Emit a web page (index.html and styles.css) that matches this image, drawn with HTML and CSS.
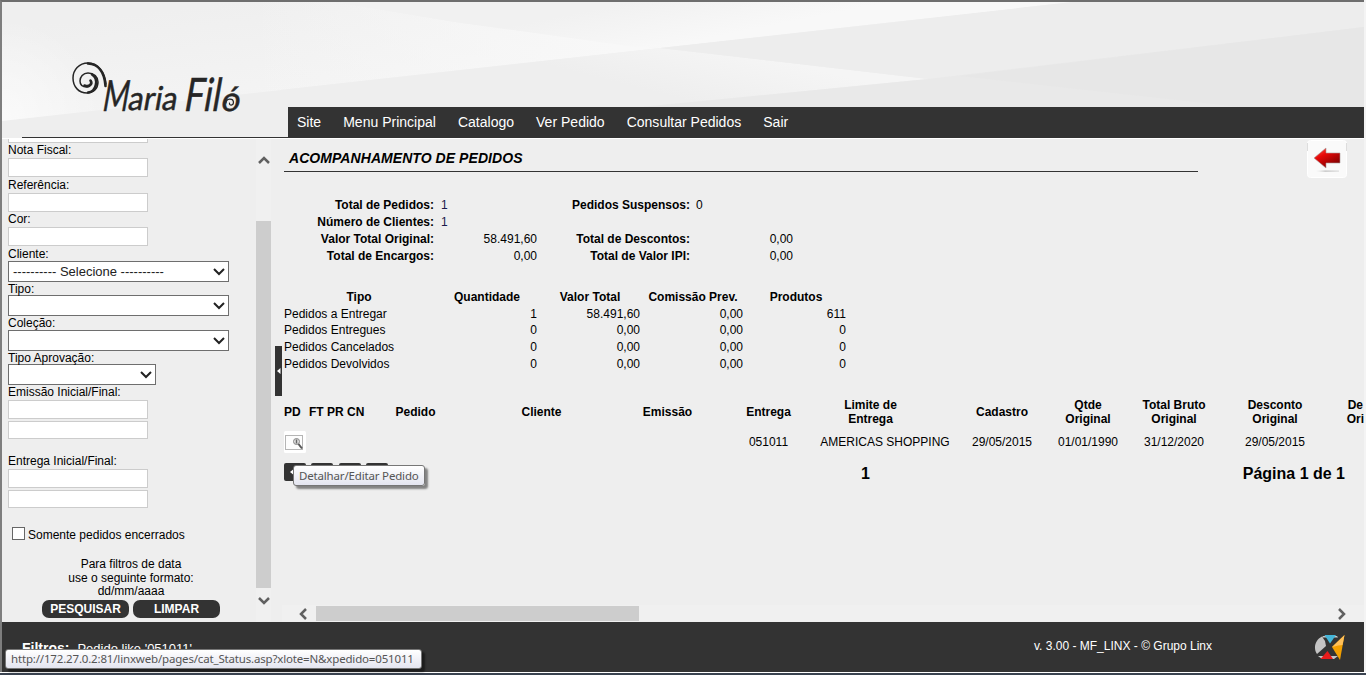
FILE: index.html
```html
<!DOCTYPE html>
<html lang="pt-BR">
<head>
<meta charset="utf-8">
<title>Acompanhamento de Pedidos</title>
<link rel="stylesheet" href="styles.css">
</head>
<body>
<div class="window">
  <header class="header">
    <svg class="header-art" width="1362" height="135" viewBox="2 2 1362 135">
      <defs>
        <linearGradient id="g1" gradientUnits="userSpaceOnUse" x1="250" y1="0" x2="262" y2="105"><stop offset="0" stop-color="#efefef"/><stop offset="1" stop-color="#f4f4f4"/></linearGradient>
        <linearGradient id="g2" gradientUnits="userSpaceOnUse" x1="250" y1="0" x2="620" y2="0"><stop offset="0" stop-color="#f8f8f8" stop-opacity="0"/><stop offset="1" stop-color="#f8f8f8"/></linearGradient>
        <linearGradient id="g3" gradientUnits="userSpaceOnUse" x1="740" y1="50" x2="725" y2="110"><stop offset="0" stop-color="#f5f5f5"/><stop offset="1" stop-color="#eeeeee"/></linearGradient>
        <linearGradient id="g4" gradientUnits="userSpaceOnUse" x1="640" y1="0" x2="650" y2="50"><stop offset="0" stop-color="#f1f1f1"/><stop offset="1" stop-color="#f8f8f8"/></linearGradient>
        <radialGradient id="g5" gradientUnits="userSpaceOnUse" cx="2" cy="118" r="100"><stop offset="0" stop-color="#fff" stop-opacity=".6"/><stop offset="1" stop-color="#fff" stop-opacity="0"/></radialGradient>
      </defs>
      <path fill="#eeeeee" d="M2 2h1362v135H2z"/>
      <path fill="url(#g1)" d="M2 2H1073L660 48 2 121z"/>
      <path fill="url(#g5)" d="M2 2H300V88L2 121z"/>
      <path fill="url(#g2)" d="M335 2 455 22 635 46 660 48 250 94V2z"/>
      <path fill="url(#g4)" d="M335 2H1073L660 48 635 47 455 22z"/>
      <path fill="url(#g3)" d="M660 48 928 79 640 107H280V90z"/>
      <path fill="#ededed" d="M660 48 1073 2H1364V27L928 79z"/>
      <path fill="#e9e9e9" d="M928 79 1364 27V107H640z"/>
      <path fill="#e7e7e7" d="M960 76 1364 27V107H1240z"/>
    </svg>
    <svg class="logo" width="178" height="64" viewBox="66 56 178 64" role="img" aria-label="Maria Filó">
      <g fill="none" stroke="#262626" stroke-linecap="round">
        <path stroke-width="1.500" d="M106 84C105 72 98 63 88 63 79 63 73 70 73 78 73 87 79 93 87 93 94 93 98 88 98 82 98 77 94 73 88 73 83 73 80 77 80 81 80 85 83 87 87 87 90 87 92 84 91 81"/>
        <path stroke-width="2.600" d="M88 63.500C98 64 104.500 72 105.500 86M88 92.500C96 92 99.500 79 92 74.500M84.500 85.500C89 87.500 93 84 90.500 80.500"/>
        <path stroke-width="1.200" d="M226 103C226 98 233 98 233.500 102 233.500 106 229 106 229.500 103"/>
      </g>
      <g class="logo-text" transform="translate(19.500 0) skewX(-10)">
        <text x="101.500" y="111.500" font-size="43" textLength="26" lengthAdjust="spacingAndGlyphs">M</text>
        <text x="127" y="110.500" font-size="33" textLength="49" lengthAdjust="spacingAndGlyphs">aria</text>
        <text x="183" y="111.500" font-size="46" textLength="36" lengthAdjust="spacingAndGlyphs">Fil</text>
        <text x="220" y="111" font-size="34" textLength="19" lengthAdjust="spacingAndGlyphs">ó</text>
      </g>
    </svg>
    <nav class="nav">
      <a>Site</a><a>Menu Principal</a><a>Catalogo</a><a>Ver Pedido</a><a>Consultar Pedidos</a><a>Sair</a>
    </nav>
  </header>

  <div class="body">
    <aside class="sidebar">
      <form class="filters">
        <div class="input cut"></div>
        <label class="l15">Nota Fiscal:</label><div class="input"></div>
        <label class="l16">Referência:</label><div class="input"></div>
        <label class="l15">Cor:</label><div class="input"></div>
        <label class="l15 low">Cliente:</label>
        <div class="select"><span>---------- Selecione ----------</span><svg width="12" height="8"><path d="M1 1 6 6 11 1"/></svg></div>
        <label class="l13">Tipo:</label>
        <div class="select"><span></span><svg width="12" height="8"><path d="M1 1 6 6 11 1"/></svg></div>
        <label class="l14">Coleção:</label>
        <div class="select"><span></span><svg width="12" height="8"><path d="M1 1 6 6 11 1"/></svg></div>
        <label class="l13">Tipo Aprovação:</label>
        <div class="select narrow"><span></span><svg width="12" height="8"><path d="M1 1 6 6 11 1"/></svg></div>
        <label class="l15">Emissão Inicial/Final:</label><div class="input"></div><div class="input second"></div>
        <label class="l15 group">Entrega Inicial/Final:</label><div class="input"></div><div class="input second"></div>
        <div class="check"><i></i><span>Somente pedidos encerrados</span></div>
        <p class="hint">Para filtros de data<br>use o seguinte formato:<br>dd/mm/aaaa</p>
        <div class="buttons"><b>PESQUISAR</b><b>LIMPAR</b></div>
      </form>
      <div class="vscroll">
        <svg width="12" height="10"><path d="M1 8 6 3 11 8"/></svg>
        <div class="vthumb"></div>
        <svg width="12" height="10"><path d="M1 2 6 7 11 2"/></svg>
      </div>
    </aside>
    <div class="splitter"><div class="handle"><svg width="5" height="6"><path fill="#fff" d="M4.500 0v6L1 3z"/></svg></div></div>

    <main class="main">
      <div class="content">
        <div class="titlebar">
          <h1>ACOMPANHAMENTO DE PEDIDOS</h1>
          <svg class="back" width="40" height="40" viewBox="0 0 40 40">
            <defs>
              <linearGradient id="red" x1="0" y1="0" x2=".7" y2="1"><stop offset="0" stop-color="#ff6a5a"/><stop offset=".4" stop-color="#e80808"/><stop offset="1" stop-color="#7a0000"/></linearGradient>
              <linearGradient id="sh" x1="0" y1="0" x2="1" y2="0"><stop offset="0" stop-color="#ddd" stop-opacity="0"/><stop offset=".4" stop-color="#bbb"/><stop offset="1" stop-color="#ddd"/></linearGradient>
            </defs>
            <rect x=".5" y="1.500" width="39" height="37" rx="3" fill="#fafafa" stroke="#fff"/>
            <path d="M.5 4V12M39.500 4V12" stroke="#ddd"/>
            <path d="M7 19 19 9V14H33V24H19V29z" fill="url(#red)" stroke="#a99" stroke-width=".6"/>
            <path d="M9 31.500H32v1.200H9z" fill="url(#sh)"/>
          </svg>
        </div>

        <div class="totals">
          <b>Total de Pedidos:</b><span class="lft">1</span><b>Pedidos Suspensos:</b><span class="lft2">0</span>
          <b>Número de Clientes:</b><span class="lft">1</span><b></b><span></span>
          <b>Valor Total Original:</b><span>58.491,60</span><b>Total de Descontos:</b><span>0,00</span>
          <b>Total de Encargos:</b><span>0,00</span><b>Total de Valor IPI:</b><span>0,00</span>
        </div>

        <div class="types">
          <b>Tipo</b><b>Quantidade</b><b>Valor Total</b><b>Comissão Prev.</b><b>Produtos</b>
          <span>Pedidos a Entregar</span><span>1</span><span>58.491,60</span><span>0,00</span><span>611</span>
          <span>Pedidos Entregues</span><span>0</span><span>0,00</span><span>0,00</span><span>0</span>
          <span>Pedidos Cancelados</span><span>0</span><span>0,00</span><span>0,00</span><span>0</span>
          <span>Pedidos Devolvidos</span><span>0</span><span>0,00</span><span>0,00</span><span>0</span>
        </div>

        <div class="orders heads">
          <b class="start">PD</b><b class="start">FT PR CN</b><b>Pedido</b><b>Cliente</b><b>Emissão</b><b>Entrega</b><b>Limite de<br>Entrega</b><b>Cadastro</b><b>Qtde<br>Original</b><b>Total Bruto<br>Original</b><b>Desconto<br>Original</b><b class="end">De<br>Ori</b>
        </div>
        <div class="orders cells">
          <svg class="start" width="22" height="22" viewBox="0 0 22 22">
            <rect width="22" height="22" rx="1.500" fill="#fff"/>
            <rect x="1.500" y="4.500" width="17" height="14" fill="#fdfdfd" stroke="#b5b5b5"/>
            <circle cx="12.500" cy="10.500" r="3" fill="#ddd" stroke="#888"/>
            <path d="M12.500 8.500v4" stroke="#666" stroke-width="1.400"/>
            <path d="M14.500 13 18 17.500" stroke="#555" stroke-width="2"/>
          </svg>
          <span></span><span></span><span></span><span></span><span>051011</span><span class="store">AMERICAS SHOPPING</span><span>29/05/2015</span><span>01/01/1990</span><span>31/12/2020</span><span>29/05/2015</span><span></span>
        </div>
        <div class="pager">
          <div class="page-buttons"><i><svg width="6" height="8"><path fill="#fff" d="M6 0v8L1 4z"/></svg></i><i></i><i></i><i></i></div>
          <b class="current">1</b><b class="pages">Página 1 de 1</b>
        </div>
      </div>
      <div class="hscroll">
        <svg width="10" height="12"><path d="M8 1 3 6 8 11"/></svg>
        <div class="hthumb"></div>
        <svg width="10" height="12"><path d="M2 1 7 6 2 11"/></svg>
      </div>
    </main>
  </div>

  <footer class="footer">
    <div class="active-filter"><b>Filtros:</b><span>Pedido like '051011'</span></div>
    <div class="version">v. 3.00 - MF_LINX - © Grupo Linx</div>
    <svg class="linx" width="32" height="28" viewBox="0 0 32 28">
      <path fill="#c4c4c4" d="M8 3.500 11 8 12 13 3 21C-1 15 1 7 8 3.500zM4 23 24 23 20 26H8z"/>
      <path fill="#c4c4c4" d="M9 3H23L24 4.500H8z"/>
      <path fill="#45b5d8" d="M10.500 2H22L16 10.500z"/>
      <path fill="#e81c1c" d="M13.500 18 19 26H6.500z"/>
      <path fill="#f3a000" d="M30.500 2 26 27 18 14z"/>
      <path fill="#ffc05a" d="M30.500 2 28.500 12Q25 12 18 14z"/>
    </svg>
  </footer>
</div>
<div class="desktop-edge"></div>
<div class="tip tip-detail">Detalhar/Editar Pedido</div>
<div class="tip tip-link">http://172.27.0.2:81/linxweb/pages/cat_Status.asp?xlote=N&amp;xpedido=051011</div>
</body>
</html>
```

FILE: styles.css
```css
* { box-sizing: border-box; }
body {
  margin: 0;
  width: 1366px;
  height: 675px;
  overflow: hidden;
  position: relative;
  background: #f4f4f4;
  color: #000;
  font: 12px/14px "Liberation Sans", Arial, sans-serif;
}
svg { display: block; flex: none; }
.window {
  width: 1364px;
  height: 672px;
  display: flex;
  flex-direction: column;
  border-top: 2px solid #6e6e6e;
  border-left: 2px solid #7e7e7e;
  background: #eee;
}
.desktop-edge { height: 3px; border-top: 1px solid #fff; background: #3a4350; }

/* header */
.header { position: relative; height: 137px; flex: none; border-bottom: 1px solid #fff; }
.header-art { position: absolute; top: 0; left: 0; }
.logo { position: absolute; left: 64px; top: 54px; }
.logo-text { font-family: Lato, "Liberation Sans", sans-serif; fill: #262626; stroke: #262626; stroke-width: .5px; }
.header::after { content: ""; position: absolute; left: 20px; bottom: 0; width: 266px; height: 1px; background: #333; }
.nav {
  position: relative;
  display: flex;
  gap: 22px;
  margin: 105px 0 0 286px;
  padding: 0 9px;
  height: 31px;
  background: #333;
  color: #fff;
  font-size: 14px;
  line-height: 31px;
  letter-spacing: .01px;
  white-space: nowrap;
}

.body { display: flex; flex: none; height: 483px; }

/* sidebar */
.sidebar { width: 269px; flex: none; display: flex; overflow: hidden; }
.filters { width: 254px; padding-left: 6px; }
.filters label { display: block; white-space: nowrap; }
.l13 { height: 13px; line-height: 14px; }
.l14 { height: 14px; line-height: 14px; }
.l15 { height: 15px; line-height: 15px; }
.l16 { height: 16px; line-height: 16px; }
.low { line-height: 17px; }
.input { width: 140px; height: 19px; background: #fff; border: 1px solid #ccc; }
.input.cut { height: 4px; border-top: 0; }
.input.second { margin-top: 2px; height: 18px; }
.filters .group { margin-top: 15px; }
.select {
  width: 221px; height: 21px; background: #fff; border: 1px solid #6e6e6e;
  display: flex; align-items: center; justify-content: space-between;
  padding: 0 3px 0 4px; font-size: 13px; color: #222;
}
.select.narrow { width: 148px; }
.select svg { fill: none; stroke: #222; stroke-width: 2; }
.check { display: flex; align-items: flex-start; gap: 3px; margin: 19px 0 0 4px; height: 14px; line-height: 16px; }
.check i { width: 13px; height: 13px; background: #fff; border: 1px solid #666; }
.hint { margin: 17px 0 0; width: 246px; text-align: center; line-height: 13.500px; }
.buttons { display: flex; gap: 4px; margin: 1px 0 0 34px; }
.buttons b { width: 87px; height: 18px; border-radius: 7px; background: #333; color: #fff; text-align: center; line-height: 18px; font-size: 12px; }
.vscroll { width: 15px; background: #f0f0f0; display: flex; flex-direction: column; align-items: center; padding: 16px 0 16px; justify-content: space-between; }
.vthumb { width: 15px; height: 367px; margin-top: 48px; background: #cdcdcd; }
.vscroll svg, .hscroll svg { fill: none; stroke: #606060; stroke-width: 2.500; }

.splitter { width: 11px; flex: none; padding: 207px 0 0 4px; }
.handle { width: 7px; height: 50px; background: #333; display: flex; align-items: center; justify-content: center; }

/* main */
.main { flex: 1; min-width: 0; display: flex; flex-direction: column; overflow: hidden; }
.content { height: 466px; overflow: hidden; padding-left: 2px; }
.titlebar { display: flex; height: 57px; }
h1 { margin: 0; width: 914px; height: 33px; border-bottom: 1px solid #333; padding-left: 5px; font: italic bold 14px/38px "Liberation Sans", Arial, sans-serif; letter-spacing: .06px; white-space: nowrap; }
.back { margin-left: 109px; }
.totals { display: grid; grid-template-columns: 150px 103px 153px 103px; grid-auto-rows: 17px; line-height: 19px; text-align: right; white-space: nowrap; }
.totals .lft, .totals .lft2 { text-align: left; padding-left: 7px; color: #1a1a4a; }
.totals .lft2 { padding-left: 6px; color: #000; }
.types { display: grid; grid-template-columns: 150px repeat(4, 103px); grid-template-rows: 17px 16px 17px 17px 17px; margin-top: 25px; line-height: 17px; text-align: right; white-space: nowrap; }
.types b { text-align: center; padding-left: 3px; }
.types b:first-child { padding: 0; }
.types span:nth-child(5n+1) { text-align: left; }
.orders {
  display: grid;
  grid-template-columns: 25px 42px 129px 123px 129px 73px 131px 132px 40px 132px 70px 54px;
  justify-items: center;
  align-items: center;
  text-align: center;
  white-space: nowrap;
}
.heads { height: 34px; margin-top: 22px; }
.orders .start { justify-self: start; }
.orders .end { justify-self: end; text-align: center; }
.store { margin-left: 29px; }
.cells { height: 26px; }
.pager { display: grid; grid-template-columns: 577px 10px 474px; height: 24px; margin-top: 7px; font-size: 16px; line-height: 24px; }
.pages { text-align: right; }
.page-buttons { display: flex; gap: 5.400px; padding-top: 1px; }
.page-buttons i { width: 22px; height: 18px; border-radius: 2px; background: #333; display: flex; align-items: center; padding-left: 5px; flex: none; }
.hscroll { height: 17px; background: #f0f0f0; display: flex; align-items: center; padding: 0 16px; }
.hthumb { width: 323px; height: 15px; margin: 0 698px 0 8px; background: #cdcdcd; }

/* footer */
.footer { height: 50px; flex: none; background: #333; color: #fff; display: flex; }
.active-filter { width: 1032px; padding: 18px 0 0 20px; line-height: 16px; font-size: 13px; }
.active-filter b { font-size: 14px; margin-right: 8px; }
.version { width: 280px; padding-top: 17px; }
.linx { margin-top: 11px; }

/* floating hints */
.tip {
  position: absolute; font: 11.500px/19px "Noto Sans", sans-serif; letter-spacing: -.17px; color: #555; white-space: nowrap;
  border: 1px solid #767676; border-radius: 3px; background: linear-gradient(#fff, #e4e5f0);
  box-shadow: 3px 3px 2px rgba(0, 0, 0, .45);
}
.tip-detail { left: 293px; top: 465px; width: 132px; height: 21px; padding-left: 5px; }
.tip-link { left: 5px; top: 649px; width: 417px; height: 20px; padding-left: 5px; line-height: 18px; }
```
